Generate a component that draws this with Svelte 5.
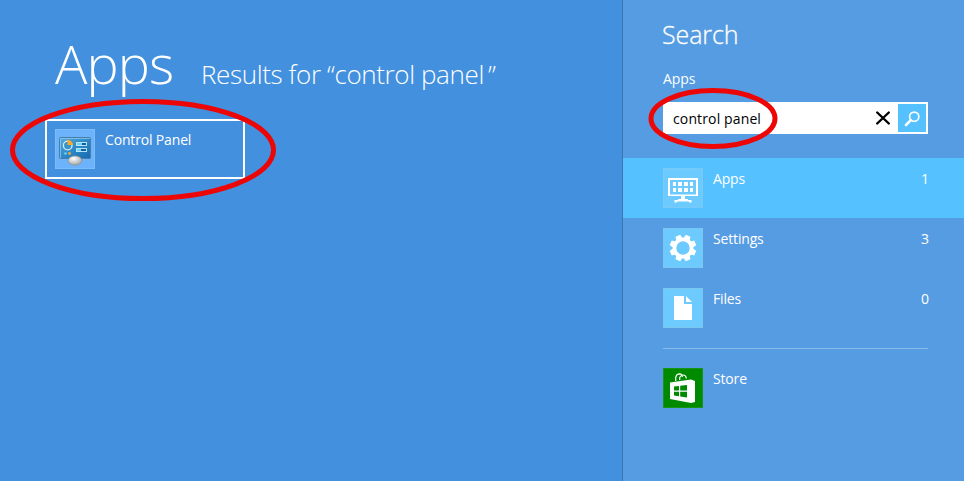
<script>
  const scopes = [
    { id: 'apps', name: 'Apps', count: 1 },
    { id: 'settings', name: 'Settings', count: 3 },
    { id: 'files', name: 'Files', count: 0 }
  ];
  let selected = $state('apps');
  let query = $state('control panel');
  const teeth = [22.5, 67.5, 112.5, 157.5, 202.5, 247.5, 292.5, 337.5];
</script>

<div class="screen">
  <main class="results">
    <header>
      <h1>Apps</h1>
      <h2>Results for “control panel<span class="quote">”</span></h2>
    </header>
    <div class="tile">
      <svg class="icon panel-icon" viewBox="0 0 40 40">
        <defs>
          <linearGradient id="monitor" x1="0" y1="0" x2="1" y2="1">
            <stop offset="0" stop-color="#58abe0" />
            <stop offset=".5" stop-color="#2e8ac8" />
            <stop offset="1" stop-color="#1769ad" />
          </linearGradient>
          <radialGradient id="knob" cx=".4" cy=".3" r=".7">
            <stop offset="0" stop-color="#fff" />
            <stop offset="1" stop-color="#a6a6a8" />
          </radialGradient>
        </defs>
        <rect x="4.5" y="8.5" width="31" height="21" rx="1" fill="url(#monitor)" stroke="#4a7ea8" />
        <path d="M5.5 29V9.500H35" fill="none" stroke="#8fd0f2" stroke-width=".7" />
        <circle cx="12.700" cy="16.500" r="4.300" fill="#3793cc" stroke="#d5eefa" stroke-width="1.300" />
        <path d="M12.500 16V10.800A5.500 5.500 0 0 1 18 16Z" fill="#f9a82b" />
        <circle cx="10.500" cy="24.500" r="1.300" fill="#72d2f5" />
        <circle cx="14.500" cy="24.500" r="1.400" fill="#f7a43a" />
        <g fill="#145f9c" stroke="#b5e4f8">
          <rect x="21.500" y="13.500" width="10" height="3" />
          <rect x="21.500" y="19.500" width="10" height="3" />
        </g>
        <path d="M22 14h5v2h-5zM22 20h4v2h-4z" fill="#6bd4f5" />
        <ellipse cx="20" cy="31.500" rx="6.800" ry="4.600" fill="url(#knob)" stroke="#8c8f92" stroke-width=".7" />
      </svg>
      <span class="label">Control Panel</span>
      <svg class="mark tile-mark" viewBox="0 0 266 102"><ellipse cx="133" cy="51" rx="130.500" ry="48.500" /></svg>
    </div>
  </main>

  <aside>
    <h3>Search</h3>
    <p class="scope">Apps</p>
    <div class="field">
      <input type="text" bind:value={query} spellcheck="false" />
      <button class="clear" aria-label="Clear" onclick={() => (query = '')}>
        <svg width="16" height="16" viewBox="0 0 16 16"><path d="M2.200 2.500l11.600 11M13.800 2.500l-11.600 11" stroke="#000" stroke-width="2.400" stroke-linecap="round" /></svg>
      </button>
      <button class="go" aria-label="Search">
        <svg width="28" height="28" viewBox="0 0 28 28" fill="none" stroke="#fff">
          <circle cx="16.200" cy="12.700" r="4.600" stroke-width="1.700" />
          <path d="M12.800 16.200L8 21" stroke-width="2.600" stroke-linecap="round" />
        </svg>
      </button>
      <svg class="mark field-mark" viewBox="0 0 130 62"><ellipse cx="65" cy="31.500" rx="62" ry="28" /></svg>
    </div>

    <nav>
      {#each scopes as s (s.id)}
        <button class="row" class:active={selected === s.id} onclick={() => (selected = s.id)}>
          <svg class="icon" viewBox="0 0 40 40">
            {#if s.id === 'apps'}
              <path fill-rule="evenodd" fill="#fff" d="M5 10H35V28H22V31H25V32H28.500V34.500H26V33.500H14V34.500H11.500V32H15V31H18V28H5ZM7 12V26.500H33V12Z" />
              <path fill="#fff" d="M10 14h3v4h-3zM15 14h4v4h-4zM21 14h4v4h-4zM27 14h3v4h-3zM10 20h3v4h-3zM15 20h4v4h-4zM21 20h4v4h-4zM27 20h3v4h-3z" />
            {:else if s.id === 'settings'}
              <g transform="translate(20 20)">
                <circle r="8.600" fill="none" stroke="#fff" stroke-width="3.800" />
                {#each teeth as a}
                  <path d="M-3.200 -9.500L-2.600 -13.300H2.600L3.200 -9.500Z" fill="#fff" transform="rotate({a})" />
                {/each}
              </g>
            {:else}
              <path d="M11 8H21V16H29V32H11ZM23 8L29 14H23Z" fill="#fff" />
            {/if}
          </svg>
          <span class="label">{s.name}</span>
          <span class="count">{s.count}</span>
        </button>
      {/each}
    </nav>
    <div class="divider"></div>
    <button class="row">
      <svg class="icon store-icon" viewBox="0 0 40 40">
        <path d="M7 14.500L28 11.500L32 13V34L28 35L7 31Z" fill="#fff" />
        <path d="M12.700 13V9.500Q13.500 5.800 16.500 5.800Q19.500 6 19.300 9M16.700 12V9.500Q18 7 20 7Q23 7 23.300 10.500" fill="none" stroke="#fff" stroke-width="1.200" />
        <path d="M11 18.500L16 18V22.500H11ZM17.200 17.800L24 17V22.500H17.200ZM11 23.700H16V28.300L11 27.600ZM17.200 23.700H24V29.400L17.200 28.500Z" fill="#008a00" />
      </svg>
      <span class="label">Store</span>
    </button>
  </aside>
</div>

<style>
  :global(body) { margin: 0; }
  .screen {
    display: flex;
    width: 964px;
    height: 481px;
    overflow: hidden;
    background: #4390df;
    color: #fff;
    font-family: "Open Sans", "Noto Sans", sans-serif;
  }
  h1, h2, h3, p { margin: 0; font-weight: 300; white-space: nowrap; }
  button, input { font: inherit; color: inherit; border: 0; padding: 0; background: none; }
  .results { width: 622px; box-sizing: border-box; padding: 27px 0 0 45px; }
  header { display: flex; align-items: baseline; height: 92px; padding-left: 10px; }
  h1 { width: 146px; font-size: 54px; line-height: 72px; letter-spacing: -.9px; }
  h2 { font-size: 26px; line-height: 36px; letter-spacing: -.38px; }
  .quote { margin-left: 4px; }
  .tile {
    position: relative;
    display: flex;
    box-sizing: border-box;
    width: 200px;
    height: 60px;
    padding: 8px;
    border: 2px solid #fff;
  }
  .icon {
    flex: none;
    display: block;
    box-sizing: border-box;
    width: 40px;
    height: 40px;
    background: #6ccaff;
    box-shadow: inset 0 0 0 1px #7bc7ee;
  }
  .panel-icon { background: #6cb3fb; box-shadow: inset 0 0 0 1px #7bbcfc; }
  .store-icon { background: #008a00; box-shadow: inset 0 0 0 1px #179416; }
  .label { margin-left: 10px; font-size: 14px; line-height: 22px; letter-spacing: -.16px; white-space: nowrap; }
  .mark { position: absolute; overflow: visible; pointer-events: none; }
  .mark ellipse { fill: none; stroke: #ed0606; stroke-width: 5; }
  .tile-mark { left: -37px; top: -22px; width: 266px; height: 102px; }
  aside {
    box-sizing: border-box;
    width: 342px;
    border-left: 1px solid #3c77b4;
    background: #569ce3;
  }
  h3 { padding: 15px 0 1px 39px; font-size: 25px; line-height: 38px; font-weight: 300; letter-spacing: -.1px; -webkit-text-stroke: .3px #fff; }
  .scope { padding: 14px 0 0 40px; font-size: 14px; line-height: 22px; font-weight: 400; letter-spacing: -.05px; }
  .field {
    position: relative;
    display: flex;
    align-items: center;
    box-sizing: border-box;
    width: 265px;
    height: 32px;
    margin: 12px 0 24px 40px;
    padding: 2px;
    background: #fff;
  }
  input { width: 202px; height: 28px; padding-left: 8px; box-sizing: border-box; outline: 0; color: #000; font-size: 14px; letter-spacing: .13px; }
  .clear { width: 31px; height: 28px; display: flex; align-items: center; justify-content: center; }
  .go { width: 28px; height: 28px; background: #55c1ff; }
  .go svg { display: block; }
  .field-mark { left: -15px; top: -15px; width: 130px; height: 62px; }
  .row {
    display: flex;
    box-sizing: border-box;
    width: 341px;
    height: 60px;
    padding: 10px 35px 10px 40px;
    text-align: left;
  }
  .row.active { background: #55c1ff; }
  .row.active .icon { box-shadow: inset 0 0 0 1px #78c9f4; background: #6ccaff; }
  .count { margin-left: auto; font-size: 14px; line-height: 22px; }
  .divider { height: 1px; margin: 10px 36px 9px 40px; background: #88b9eb; }
</style>
